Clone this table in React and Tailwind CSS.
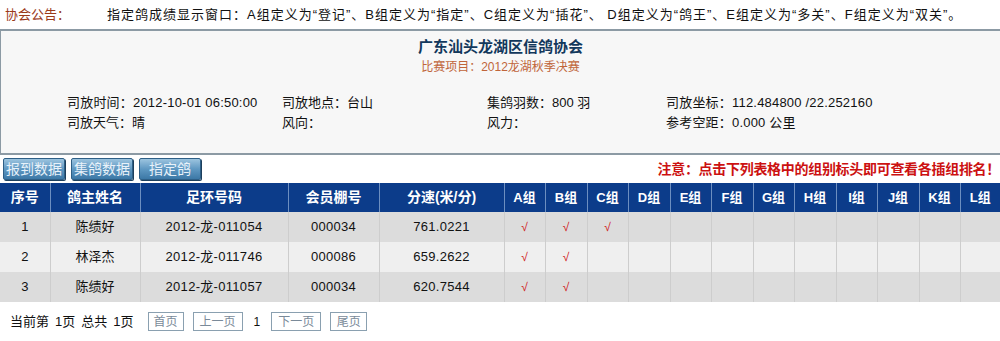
import React from "react";

const groups = ["A组","B组","C组","D组","E组","F组","G组","H组","I组","J组","K组","L组"];
const gw = [41,42,41,42,41,42,41,42,41,42,41,40];
const rows = [
  { n: "1", name: "陈绩好", ring: "2012-龙-011054", shed: "000034", speed: "761.0221", checks: [0,1,2] },
  { n: "2", name: "林泽杰", ring: "2012-龙-011746", shed: "000086", speed: "659.2622", checks: [0,1] },
  { n: "3", name: "陈绩好", ring: "2012-龙-011057", shed: "000034", speed: "620.7544", checks: [0,1] },
];

function Btn({ children }) {
  return (
    <div className="h-[22px] w-[62px] flex items-center justify-center rounded-[2px] border border-[#2e5f86] bg-gradient-to-b from-[#9cc4df] via-[#5f98c2] to-[#3c78a6] text-[14px] text-[#e8f2fa] shadow-[1px_1px_0_#1d3f5c]">
      {children}
    </div>
  );
}

function PageBtn({ children, w }) {
  return (
    <div className={`h-[19px] ${w} flex items-center justify-center border border-[#8aa0b0] bg-white text-[12px] text-[#7a8a99]`}>
      {children}
    </div>
  );
}

export default function App() {
  return (
    <div className="w-[1000px] h-[341px] bg-white overflow-hidden text-[13px] text-[#111]" style={{ fontFamily: '"Liberation Sans", "Noto Sans CJK SC", sans-serif' }}>
      <div className="h-[29px] flex items-center">
        <span className="ml-[5px] w-[102px] text-[#9a3a1a]">协会公告：</span>
        <span className="tracking-[1px]">指定鸽成绩显示窗口：A组定义为“登记”、B组定义为“指定”、C组定义为“插花”、 D组定义为“鸽王”、E组定义为“多关”、F组定义为“双关”。</span>
      </div>
      <div className="h-[126px] border-t-2 border-l border-b-2 border-[#8c9aa4] bg-[#f7f7f7]">
        <div className="pt-[5px] text-center text-[15px] font-bold text-[#12385c] leading-[22px]">广东汕头龙湖区信鸽协会</div>
        <div className="text-center text-[12px] text-[#c0653a] leading-[18px]">比赛项目：2012龙湖秋季决赛</div>
        <div className="mt-[17px] grid grid-cols-[215px_205px_179px_1fr] pl-[66px] leading-[20px]">
          <div className="tracking-[0.2px]">司放时间：2012-10-01 06:50:00</div>
          <div>司放地点：台山</div>
          <div>集鸽羽数：800 羽</div>
          <div className="tracking-[0.2px]">司放坐标：112.484800 /22.252160</div>
          <div>司放天气：晴</div>
          <div>风向：</div>
          <div>风力：</div>
          <div className="tracking-[0.2px]">参考空距：0.000 公里</div>
        </div>
      </div>
      <div className="h-[28px] flex items-center pl-[3px] gap-[6px]">
        <Btn>报到数据</Btn>
        <Btn>集鸽数据</Btn>
        <Btn>指定鸽</Btn>
        <div className="ml-auto mr-[0px] text-[14px] font-bold text-[#cc1111] tracking-[-0.3px]">注意：点击下列表格中的组别标头即可查看各插组排名！</div>
      </div>
      <table className="w-[1000px] table-fixed border-collapse text-center">
        <colgroup>
          <col style={{ width: 50 }} />
          <col style={{ width: 90 }} />
          <col style={{ width: 148 }} />
          <col style={{ width: 91 }} />
          <col style={{ width: 125 }} />
          {gw.map((w, i) => <col key={i} style={{ width: w }} />)}
        </colgroup>
        <thead>
          <tr className="h-[29px] bg-[#0c3c8a] text-white font-bold text-[14px]">
            {["序号","鸽主姓名","足环号码","会员棚号","分速(米/分)"].map((h, i) => (
              <th key={i} className="border-l border-[#6d8fc0] first:border-l-0 font-bold">{h}</th>
            ))}
            {groups.map((g) => (
              <th key={g} className="border-l border-[#6d8fc0] font-bold text-[13px]">{g}</th>
            ))}
          </tr>
        </thead>
        <tbody>
          {rows.map((r, ri) => (
            <tr key={ri} className={`h-[30px] ${ri % 2 === 0 ? "bg-[#dcdcdc]" : "bg-[#efefef]"}`}>
              <td className="border-l border-[#cdcdcd] first:border-l-0">{r.n}</td>
              <td className="border-l border-[#cdcdcd]">{r.name}</td>
              <td className="border-l border-[#cdcdcd] tracking-[0.3px]">{r.ring}</td>
              <td className="border-l border-[#cdcdcd] tracking-[0.3px]">{r.shed}</td>
              <td className="border-l border-[#cdcdcd] tracking-[0.3px]">{r.speed}</td>
              {groups.map((g, gi) => (
                <td key={g} className="border-l border-[#cdcdcd] text-[#d02020] italic text-[12px]">
                  {r.checks.includes(gi) ? "√" : ""}
                </td>
              ))}
            </tr>
          ))}
        </tbody>
      </table>
      <div className="mt-[10px] flex items-center pl-[10px] text-[13px]">
        <span className="flex gap-[6px]"><span>当前第</span><span>1页</span><span>总共</span><span>1页</span></span>
        <div className="ml-[14px] flex items-center gap-[9px]">
          <PageBtn w="w-[36px]">首页</PageBtn>
          <PageBtn w="w-[50px]">上一页</PageBtn>
          <span className="px-[2px] text-[12px]">1</span>
          <PageBtn w="w-[50px]">下一页</PageBtn>
          <PageBtn w="w-[37px]">尾页</PageBtn>
        </div>
      </div>
    </div>
  );
}
